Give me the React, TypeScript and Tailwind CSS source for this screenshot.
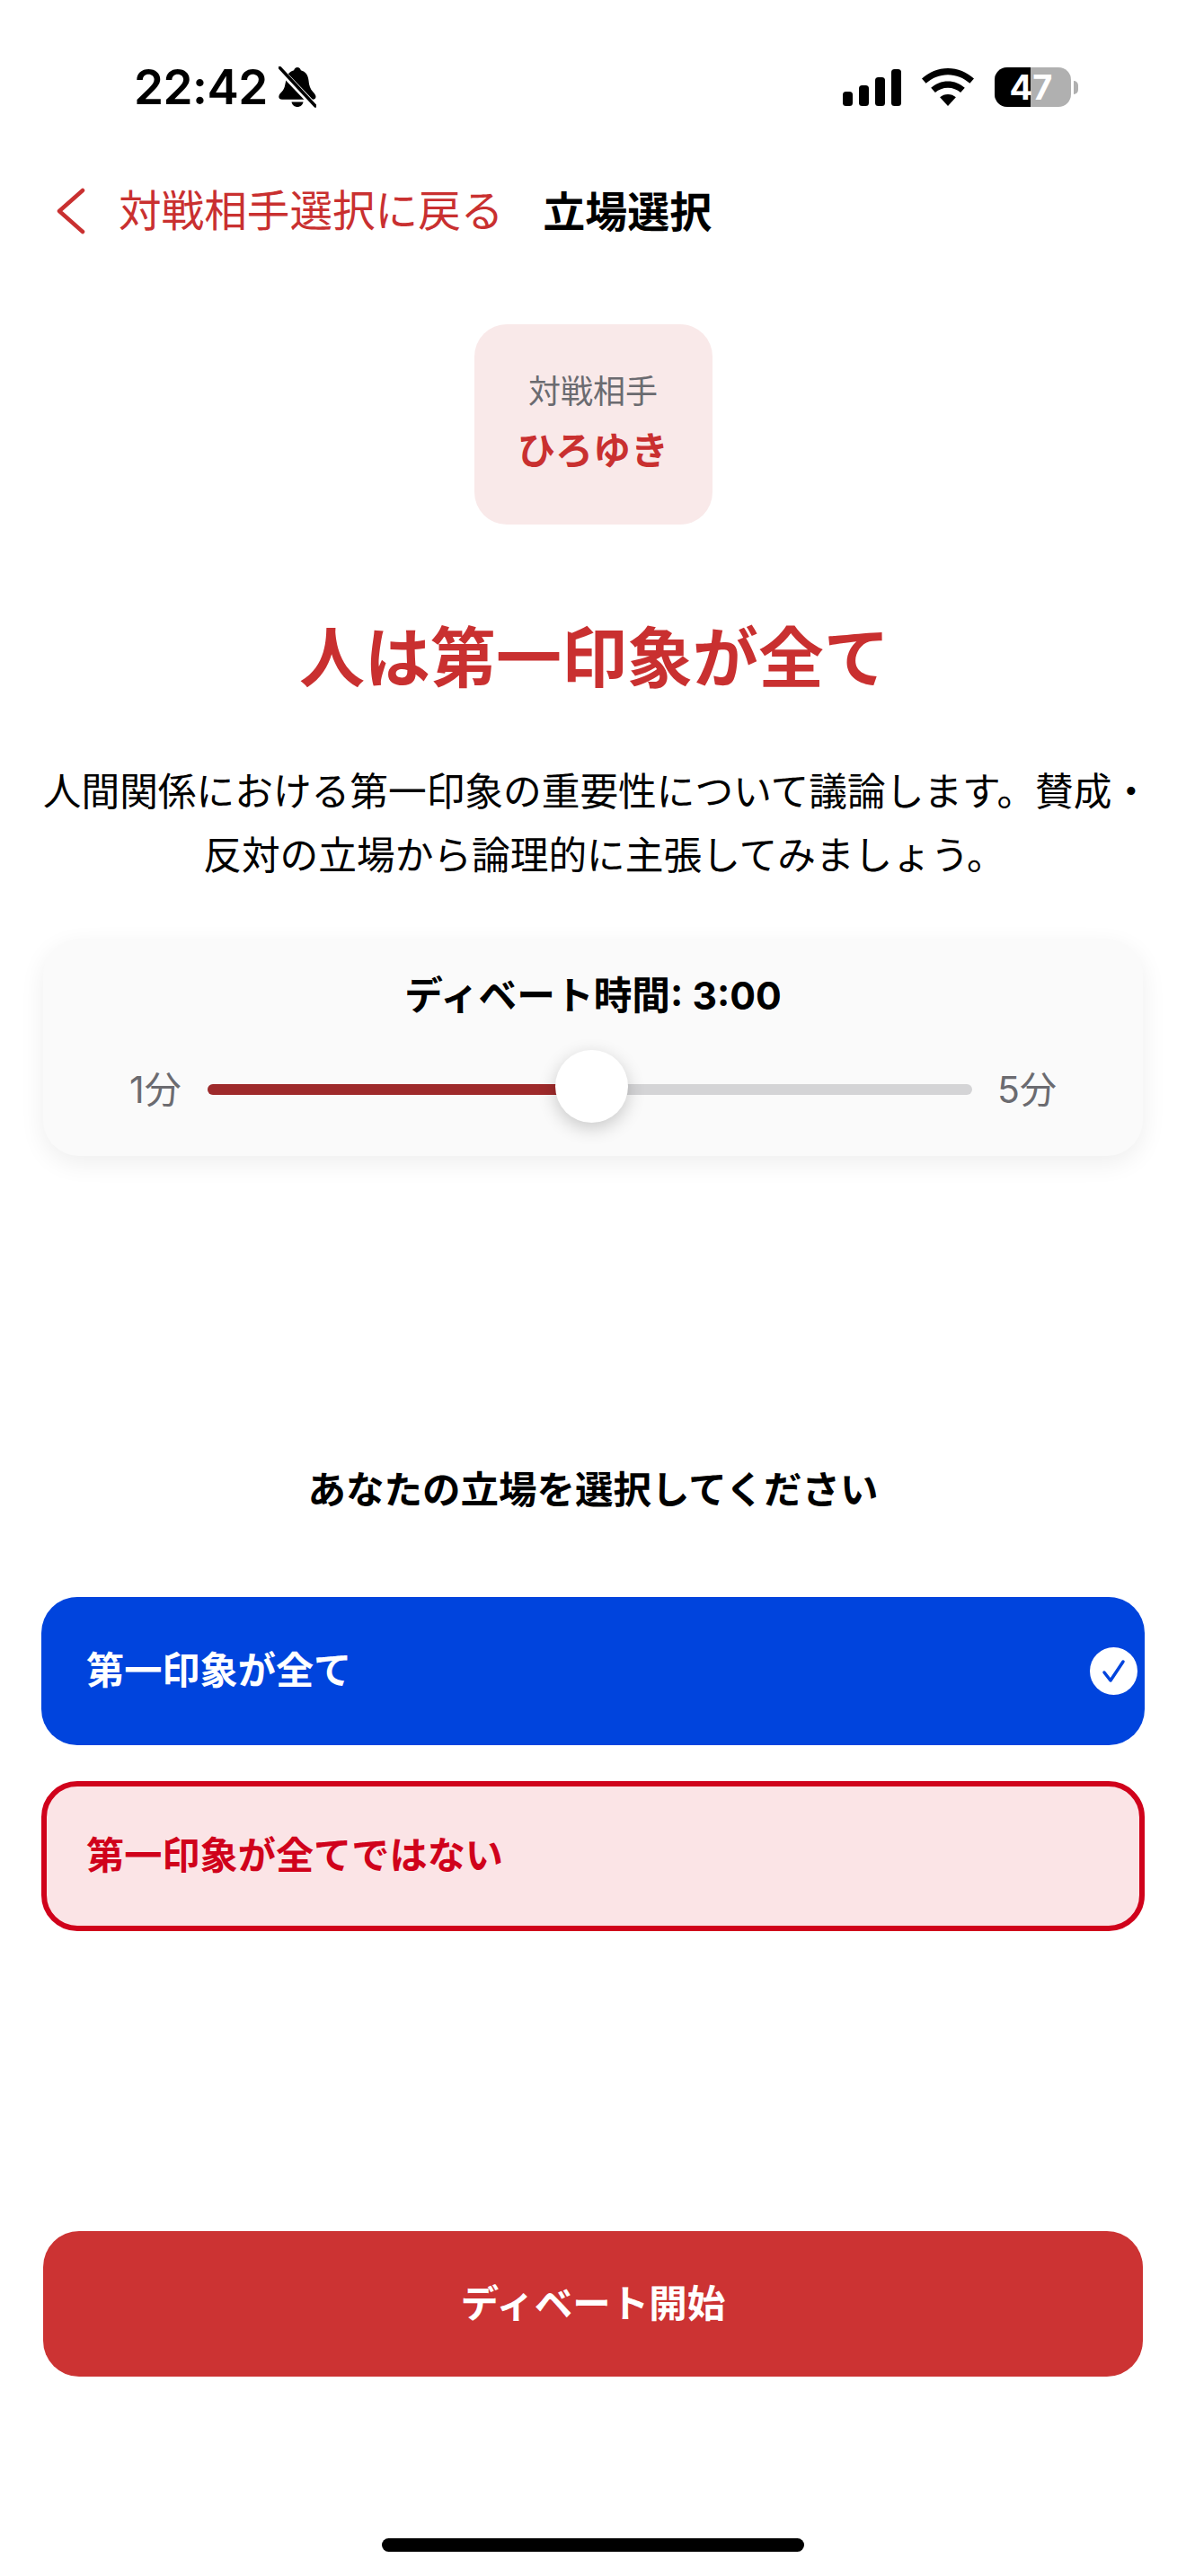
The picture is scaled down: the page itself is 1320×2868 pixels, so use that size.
function BellSlash() {
  return (
    <svg viewBox="0 0 42 46" className="w-[42px] h-[46px] ml-[12px]">
      <path
        d="M21 1c2 0 3.5 1.3 3.8 3.2 5.5 1.3 8.2 5.6 8.7 11.6.4 5.6 1.8 9.2 4.8 12.4 2 2.2 3.2 3.8 3.2 5.6 0 1.8-1.400 3-3.400 3H4c-2.300 0-3.700-1.200-3.700-3 0-1.800 1.300-3.400 3-5.200 2.300-2.500 3.400-5 4-8.400L8 17c.6-6.400 3.200-11.500 9.200-12.800C17.500 2.300 19 1 21 1z"
        fill="black"
      />
      <path d="M14.500 39.500h13c-.6 3.300-3.200 5.500-6.500 5.500s-5.900-2.200-6.500-5.500z" fill="black" />
      <path d="M0 2l40 42" stroke="white" strokeWidth="7" />
      <path d="M1 1l40 43" stroke="black" strokeWidth="3.500" strokeLinecap="round" />
    </svg>
  );
}

function SignalIcon() {
  return (
    <svg viewBox="0 0 65 41" className="w-[65px] h-[41px]">
      <rect x="0" y="25" width="11" height="16" rx="3.500" fill="black" />
      <rect x="18" y="18" width="11" height="23" rx="3.500" fill="black" />
      <rect x="36" y="9" width="11" height="32" rx="3.500" fill="black" />
      <rect x="54" y="0" width="11" height="41" rx="3.500" fill="black" />
    </svg>
  );
}

function WifiIcon() {
  return (
    <svg viewBox="0 0 58 42" className="w-[58px] h-[42px]">
      <path d="M29 0c11 0 21 4.300 29 11.600l-4.600 5.200C46.500 10.600 38 7.200 29 7.200S11.500 10.600 4.600 16.800L0 11.600C8 4.300 18 0 29 0z" fill="black" />
      <path d="M29 14.500c7.200 0 13.700 2.700 18.800 7.300l-4.700 5.200c-3.800-3.300-8.700-5.300-14.100-5.300s-10.300 2-14.100 5.300l-4.700-5.200c5.100-4.600 11.600-7.300 18.800-7.300z" fill="black" />
      <path d="M29 29c3.400 0 6.500 1.200 8.900 3.300L29 42l-8.900-9.700c2.400-2.100 5.500-3.300 8.900-3.300z" fill="black" />
    </svg>
  );
}

function Battery() {
  return (
    <div className="flex items-center gap-[3px]">
      <div className="relative w-[85px] h-[44px] rounded-[14px] bg-[#b0b0b0] overflow-hidden">
        <div className="absolute left-0 top-0 bottom-0 w-[40px] bg-black" />
        <div className="absolute inset-0 flex items-center justify-center text-white text-[38px] font-bold leading-none pr-[4px]">
          47
        </div>
      </div>
      <div className="w-[5px] h-[15px] rounded-r-full bg-[#b0b0b0]" />
    </div>
  );
}

export default function App() {
  return (
    <div className="relative w-[1320px] h-[2868px] overflow-hidden bg-white flex flex-col font-['Inter','Noto_Sans_CJK_JP',sans-serif] text-black">
      {/* status bar */}
      <div className="h-[130px] pt-[64px] pl-[149px] pr-[120px] flex items-center justify-between">
        <div className="flex items-center">
          <span className="text-[53px] font-semibold leading-none tracking-[-0.5px]">22:42</span>
          <BellSlash />
        </div>
        <div className="flex items-center gap-[23px]">
          <SignalIcon />
          <WifiIcon />
          <Battery />
        </div>
      </div>

      {/* nav */}
      <div className="h-[210px] pl-[62px] flex items-center">
        <svg viewBox="0 0 33 52" className="w-[33px] h-[52px]" fill="none" stroke="#c93030" strokeWidth="4.500" strokeLinecap="round" strokeLinejoin="round">
          <path d="M30 3L4 26l26 23" />
        </svg>
        <span className="ml-[37px] text-[47.6px] leading-none text-[#c93030]">対戦相手選択に戻る</span>
        <span className="ml-[44px] text-[47px] leading-none font-bold">立場選択</span>
      </div>

      {/* opponent */}
      <div className="mt-[21px] self-center w-[265px] h-[223px] pb-[4px] rounded-[36px] bg-[#f9e9e9] flex flex-col items-center justify-center">
        <span className="text-[36px] leading-none text-[#6b6b70]">対戦相手</span>
        <span className="mt-[27px] text-[42px] leading-none font-bold text-[#c93030]">ひろゆき</span>
      </div>

      <h1 className="mt-[99px] h-[100px] pl-[3px] text-center text-[73px] leading-[100px] font-bold text-[#c93030]">人は第一印象が全て</h1>

      <p className="mt-[63px] pl-[44px] pr-[36px] text-center text-[42.7px] leading-[71px]">
        人間関係における第一印象の重要性について議論します。賛成・
        <br />
        <span className="ml-[17px]">反対の立場から論理的に主張してみましょう。</span>
      </p>

      {/* time slider */}
      <div className="mt-[58px] mx-[48px] h-[241px] rounded-[40px] bg-[#fafafa] shadow-[0_8px_28px_rgba(0,0,0,0.07)] flex flex-col">
        <div className="mt-[38px] h-[50px] text-center text-[42.7px] leading-[50px] font-bold">ディベート時間: 3:00</div>
        <div className="mt-[73px] pl-[96px] pr-[96px] h-[12px] flex items-center">
          <span className="w-[57px] whitespace-nowrap text-[41px] leading-none text-[#6b6b70]">1分</span>
          <div className="relative ml-[30px] w-[853px] h-[12px] rounded-full bg-[#d4d4d6]">
            <div className="h-full w-[428px] rounded-full bg-[#9e2a2b]" />
            <div className="absolute left-[387px] top-[-38px] w-[81px] h-[81px] rounded-full bg-white shadow-[0_6px_20px_rgba(0,0,0,0.2)]" />
          </div>
          <span className="ml-[28px] whitespace-nowrap text-[41px] leading-none text-[#6b6b70]">5分</span>
        </div>
      </div>

      <div className="mt-[342px] h-[60px] text-center text-[42.5px] leading-[60px] font-bold">あなたの立場を選択してください</div>

      {/* stance options */}
      <div className="mt-[89px] mx-[46px] h-[165px] rounded-[40px] bg-[#0044dd] pl-[50px] pr-[8px] flex items-center justify-between">
        <span className="text-[42.2px] leading-none font-semibold text-white">第一印象が全て</span>
        <span className="w-[53px] h-[53px] rounded-full bg-white flex items-center justify-center">
          <svg viewBox="0 0 28 28" className="w-[28px] h-[28px]" fill="none" stroke="#0044dd" strokeWidth="3.500" strokeLinecap="round" strokeLinejoin="round">
            <path d="M3 15l7 9L24 3" />
          </svg>
        </span>
      </div>
      <div className="mt-[40px] mx-[46px] h-[167px] rounded-[40px] border-[6px] border-[#d0021b] bg-[#fbe4e6] pl-[44px] flex items-center">
        <span className="text-[42.2px] leading-none font-bold text-[#d0021b]">第一印象が全てではない</span>
      </div>

      <button className="mt-[334px] mx-[48px] h-[162px] rounded-[40px] bg-[#cc3333] text-white text-[42.5px] font-bold flex items-center justify-center">
        ディベート開始
      </button>

      {/* home indicator */}
      <div className="mt-[180px] self-center w-[470px] h-[15px] rounded-full bg-black" />
    </div>
  );
}
